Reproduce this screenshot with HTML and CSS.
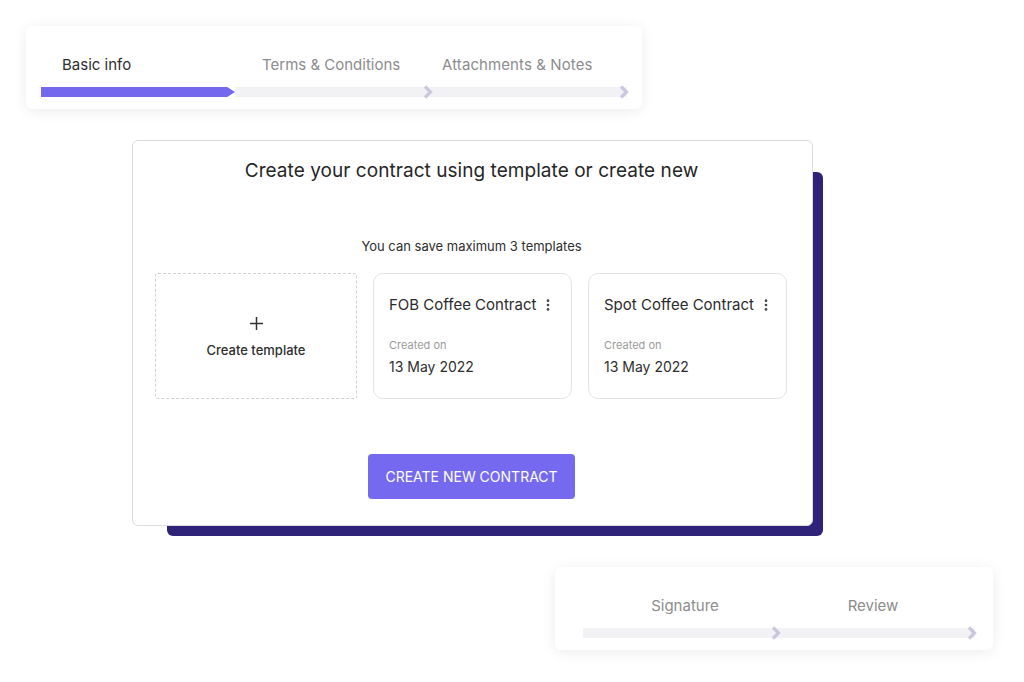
FILE: index.html
```html
<!DOCTYPE html>
<html lang="en">
<head>
	<meta charset="UTF-8">
	<title>Create contract</title>
	<link rel="stylesheet" href="styles.css">
</head>
<body>
	<!-- top steps panel -->
	<div class="panel panel-top">
		<div class="labels">
			<span class="lbl lbl-basic">Basic info</span>
			<span class="lbl lbl-terms">Terms &amp; Conditions</span>
			<span class="lbl lbl-attach">Attachments &amp; Notes</span>
		</div>
		<div class="bars">
			<div class="seg seg-active"></div>
			<div class="seg"><svg class="chev" viewBox="0 0 10 14"><path d="M2 1.5 L7.5 7 L2 12.5"/></svg></div>
			<div class="seg"><svg class="chev" viewBox="0 0 10 14"><path d="M2 1.5 L7.5 7 L2 12.5"/></svg></div>
		</div>
	</div>

	<!-- main card -->
	<div class="stage">
		<div class="backdrop"></div>
		<div class="card">
			<h1 class="title">Create your contract using template or create new</h1>
			<p class="hint">You can save maximum 3 templates</p>
			<div class="tpl-row">
				<div class="tpl tpl-new">
					<svg class="plus" viewBox="0 0 16 16"><path d="M8 1v14M1 8h14"/></svg>
					<span>Create template</span>
				</div>
				<div class="tpl">
					<div class="tpl-head">
						<span>FOB Coffee Contract</span>
						<svg class="kebab" viewBox="0 0 4 16"><circle cx="2" cy="3" r="1.5"/><circle cx="2" cy="8" r="1.5"/><circle cx="2" cy="13" r="1.5"/></svg>
					</div>
					<div class="tpl-meta">Created on</div>
					<div class="tpl-date">13 May 2022</div>
				</div>
				<div class="tpl">
					<div class="tpl-head">
						<span>Spot Coffee Contract</span>
						<svg class="kebab" viewBox="0 0 4 16"><circle cx="2" cy="3" r="1.5"/><circle cx="2" cy="8" r="1.5"/><circle cx="2" cy="13" r="1.5"/></svg>
					</div>
					<div class="tpl-meta">Created on</div>
					<div class="tpl-date">13 May 2022</div>
				</div>
			</div>
			<button class="btn">CREATE NEW CONTRACT</button>
		</div>
	</div>

	<!-- bottom steps panel -->
	<div class="panel panel-bottom">
		<div class="labels">
			<span class="lbl lbl-sign">Signature</span>
			<span class="lbl lbl-review">Review</span>
		</div>
		<div class="bars">
			<div class="seg"><svg class="chev" viewBox="0 0 10 14"><path d="M2 1.5 L7.5 7 L2 12.5"/></svg></div>
			<div class="seg"><svg class="chev" viewBox="0 0 10 14"><path d="M2 1.5 L7.5 7 L2 12.5"/></svg></div>
		</div>
	</div>
</body>
</html>
```
FILE: styles.css
```css
*{margin:0;padding:0;box-sizing:border-box;}
body{
	width:1024px;
	height:682px;
	background:#fff;
	font-family:Inter,"Noto Sans",sans-serif;
	color:#2b2b2b;
	position:relative;
	overflow:hidden;
}

/* floating step panels */
.panel{
	position:absolute;
	background:#fff;
	border-radius:6px;
	box-shadow:0 2px 14px rgba(0,0,0,0.08);
}
.panel-top{left:26px;top:26px;width:616px;height:83px;padding:29px 15px 0 15px;}
.panel-bottom{left:555px;top:567px;width:438px;height:83px;padding:29px 15px 0 28px;}

.labels{display:flex;height:22px;}
.lbl{font-size:15px;line-height:20px;color:#8c8c8c;white-space:nowrap;}
.lbl-basic{width:194px;padding-left:21px;color:#2e2e2e;}
.lbl-terms{width:197px;padding-left:27px;}
.lbl-attach{width:195px;padding-left:10px;letter-spacing:0.1px;}
.lbl-sign{width:196px;padding-left:8px;text-align:center;}
.lbl-review{width:196px;padding-right:8px;text-align:center;}

.bars{display:flex;margin-top:10px;}
.seg{
	position:relative;
	width:196px;
	height:10px;
	background:#f2f2f5;
}
.seg-active{
	width:194px;
	background:#7468ee;
	clip-path:polygon(0 0,96% 0,100% 50%,96% 100%,0 100%);
}
.chev{
	position:absolute;
	z-index:1;
	right:-2px;
	top:-2px;
	width:10px;
	height:14px;
	fill:none;
	stroke:#c9c7dd;
	stroke-width:3.2;
}

/* main card */
.stage{position:absolute;left:132px;top:140px;width:691px;height:396px;}
.backdrop{
	position:absolute;
	left:35px;
	top:32px;
	width:656px;
	height:364px;
	background:#2f2379;
	border-radius:6px;
}
.card{
	position:relative;
	width:681px;
	height:386px;
	background:#fff;
	border:1px solid #dcdcdc;
	border-radius:6px;
	display:flex;
	flex-direction:column;
	align-items:center;
	padding:17px 24px 0 22px;
}
.title{font-size:19px;font-weight:400;line-height:26px;color:#262626;letter-spacing:0.05px;}
.hint{margin-top:53px;font-size:13px;line-height:18px;color:#2e2e2e;}
.tpl-row{
	display:grid;
	grid-template-columns:202px 199px 199px;
	gap:16px;
	margin-top:18px;
	align-self:stretch;
}
.tpl{
	height:126px;
	border:1px solid #e3e3e3;
	border-radius:10px;
	padding:20px 15px 0 15px;
}
.tpl-new{
	border:1.5px dashed #cfcfd4;
	border-radius:3px;
	display:flex;
	flex-direction:column;
	align-items:center;
	padding-top:42px;
	font-size:13px;
	font-weight:500;
	color:#2e2e2e;
}
.plus{width:15px;height:15px;stroke:#333;stroke-width:1.6;margin-bottom:11px;}
.tpl-head{display:flex;align-items:center;gap:10px;font-size:15px;line-height:22px;color:#2b2b2b;}
.kebab{width:4px;height:14px;fill:#444;}
.tpl-meta{margin-top:22px;font-size:11px;line-height:14px;color:#9a9a9a;}
.tpl-date{margin-top:5px;font-size:14px;line-height:20px;color:#2e2e2e;}
.btn{
	margin-top:55px;
	width:207px;
	height:45px;
	border:none;
	border-radius:4px;
	background:#7569ef;
	color:#fff;
	font-family:Inter,"Noto Sans",sans-serif;
	font-size:14px;
	font-weight:400;
	cursor:pointer;
}
```
